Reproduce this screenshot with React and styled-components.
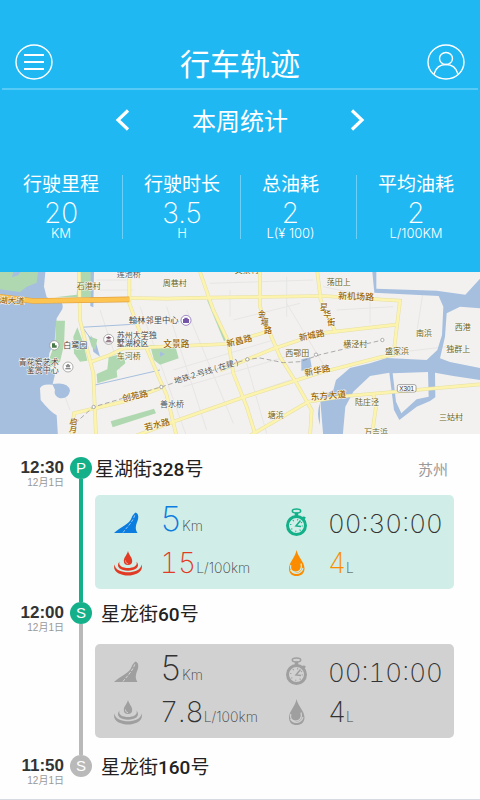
import React from 'react';
import styled, { createGlobalStyle } from 'styled-components';

const colors = {
  sky: '#1fb8f3',
  green: '#14b08a',
  grey: '#b9b9b9',
  mint: '#d0eee7',
  silver: '#d1d1d1',
  text: '#333333',
  muted: '#999999',
};

const GlobalStyle = createGlobalStyle`
  * {
    box-sizing: border-box;
  }

  body {
    margin: 0;
    background: #fefefe;
    color: ${colors.text};
    font-family: 'Noto Sans CJK SC', sans-serif;
  }

  button {
    padding: 0;
    border: 0;
    background: none;
    color: inherit;
    cursor: pointer;
  }
`

const Header = styled.header`
  background-color: ${colors.sky};
  color: #fff;
  padding: 36px 2px 33px;
`

const TopBar = styled.div`
  display: flex;
  align-items: center;
  justify-content: space-between;
  height: 54px;
  padding: 0 13px;
  border-bottom: 2px solid rgba(255, 255, 255, 0.25);
`

const Title = styled.h1`
  margin: 0;
  font-size: 30px;
  line-height: 40px;
  font-weight: 400;
`

const IconButton = styled.button`
  display: flex;
`

const PeriodBar = styled.nav`
  display: flex;
  align-items: center;
  justify-content: center;
  gap: 62px;
  height: 60px;
`

const Period = styled.h2`
  margin: 0;
  font-size: 24px;
  line-height: 32px;
  font-weight: 400;
`

const Stats = styled.div`
  display: grid;
  grid-template-columns: 120fr 118fr 116fr 122fr;
  margin-top: 25px;
`

const StatCell = styled.div`
  display: flex;
  padding-left: 21px;
  height: 64px;

  & + & {
    border-left: 1px solid rgba(255, 255, 255, 0.35);
  }
`

const Stat = styled.div`
  display: flex;
  flex-direction: column;
  align-items: center;
  margin-top: -6px;
  white-space: nowrap;
`

const StatLabel = styled.span`
  font-size: 19px;
  line-height: 28px;
`

const StatValue = styled.span`
  font-family: Inter, sans-serif;
  font-size: 28px;
  line-height: 32px;
  font-weight: 200;
`

const StatUnit = styled.span`
  font-family: Inter, 'Noto Sans CJK SC', sans-serif;
  font-size: 13px;
  line-height: 16px;
  margin-top: -4px;
  font-weight: 300;
`

const MapView = styled.svg`
  display: block;
  width: 100%;
  background-color: #f2f1ef;
  font-family: 'Noto Sans CJK SC', sans-serif;
  font-size: 24px;

  text {
    paint-order: stroke;
    stroke: #fbfaf5;
    stroke-width: 3px;
  }
`

const Timeline = styled.ol`
  list-style: none;
  margin: 0;
  padding: 23px 26px 13px 0;
  border-bottom: 1px solid #d5dbe0;
`

const Entry = styled.li`
  display: flex;
`

const When = styled.div`
  width: 64px;
  margin-right: 6px;
  padding-top: 1px;
  flex: none;
  text-align: right;
`

const Clock = styled.time`
  display: block;
  font-family: 'Liberation Sans', sans-serif;
  font-size: 17px;
  line-height: 20px;
  font-weight: 700;
`

const Day = styled.span`
  display: block;
  font-family: 'Liberation Sans', 'Noto Sans CJK SC', sans-serif;
  font-size: 10px;
  line-height: 10px;
  color: ${colors.muted};
`

const Rail = styled.div`
  display: flex;
  flex-direction: column;
  align-items: center;
  flex: none;
  width: 22px;
  margin-right: 3px;

  &::after {
    content: '';
    flex: 1;
    width: 4px;
    background-color: ${props => props.$line};
  }
`

const Dot = styled.span`
  width: 22px;
  height: 22px;
  border-radius: 50%;
  background-color: ${props => props.$color};
  color: #fff;
  font-family: 'Liberation Sans', sans-serif;
  font-size: 15px;
  line-height: 22px;
  text-align: center;
`

const Stop = styled.div`
  flex: 1;
  padding-bottom: ${props => props.$last ? 0 : props.$start ? 13 : 17}px;
`

const StopHead = styled.div`
  display: flex;
  align-items: center;
  justify-content: space-between;
  height: 22px;
  padding: 2px 6px 0 ${props => props.$start ? 0 : 6}px;
`

const Place = styled.h3`
  margin: 0;
  font-size: 19px;
  line-height: 22px;
  font-weight: 400;
  color: #222;
`

const HouseNumber = styled.span`
  font-family: Roboto, sans-serif;
  font-weight: 500;
`

const City = styled.span`
  font-size: 15px;
  line-height: 22px;
  color: ${colors.muted};
`

const Card = styled.div`
  display: grid;
  grid-template-columns: 1fr 1fr;
  margin-top: ${props => props.$active ? 16 : 20}px;
  padding: 5px 5px 5px 18px;
  border-radius: 5px;
  background-color: ${props => props.$active ? colors.mint : colors.silver};
`

const Metric = styled.div`
  display: flex;
  align-items: center;
  gap: 17px;
  height: 42px;
  color: ${props => props.$color};
`

const Reading = styled.div`
  padding-top: 3px;
  color: ${props => props.$color};
  font-family: Inter, sans-serif;
  font-size: 34px;
  line-height: 42px;
  font-weight: 200;
  white-space: nowrap;
`

const Figure = styled.span`
  font-size: ${props => props.$size}px;
  font-variant-numeric: tabular-nums;
`

const Unit = styled.span`
  font-size: 14px;
  color: #444;
`

const MenuIcon = () => (
  <svg width="38" height="38" viewBox="0 0 38 38" fill="none" stroke="currentColor">
    <ellipse cx="19" cy="19" rx="18" ry="17" strokeWidth="1.4" />
    <path d="M9 12h20M9 19h20M9 26h20" strokeWidth="1.8" />
  </svg>
)

const UserIcon = () => (
  <svg width="38" height="38" viewBox="0 0 38 38" fill="none" stroke="currentColor" strokeWidth="1.4">
    <ellipse cx="19" cy="19" rx="18" ry="17" />
    <ellipse cx="19" cy="15.500" rx="6.500" ry="6" />
    <path d="M7 31C9 24 14 21.500 19 21.500S29 24 31 31" />
  </svg>
)

const Chevron = ({ flip }) => (
  <svg width="15" height="22" viewBox="0 0 15 22" fill="none" stroke="currentColor" strokeWidth="3.200">
    <path d={flip ? 'M2 1.500L12 11L2 20.500' : 'M13 1.500L3 11L13 20.500'} />
  </svg>
)

const RoadIcon = () => (
  <svg width="30" height="28" viewBox="0 0 30 28">
    <path d="M1 26C7 20 17 17 18.500 11C19.500 8 21 7 22.500 5.500C25.500 6.500 26 10 24.500 14C22.500 19 22 22 24.500 26Z" fill="currentColor" />
    <path d="M10 25.500C14 20 20 15 22 7.500" fill="none" stroke="#fff" strokeOpacity="0.7" strokeWidth="0.8" strokeDasharray="3 1.500" />
  </svg>
)

const RippleIcon = () => (
  <svg width="30" height="28" viewBox="0 0 30 28" fill="currentColor">
    <path d="M15 2C16 6 19.200 8.500 19.200 12A4.200 4 0 0 1 10.800 12C10.800 8.500 14 6 15 2Z" />
    <path d="M6.500 12.500C2 18 8 21.800 15 21.800S28 18 23.500 12.500C25 17 20 19 15 19S5 17 6.500 12.500Z" />
    <path d="M1.500 15.500C-1 23 8 26.500 15 26.500S31 23 28.500 15.500C28 21 21 23.300 15 23.300S2 21 1.500 15.500Z" />
    <path d="M12.500 11.500C12.500 13.500 13.500 14.500 15 14.700" fill="none" stroke="#fff" strokeOpacity="0.7" strokeWidth="0.7" />
  </svg>
)

const StopwatchIcon = () => (
  <svg width="30" height="30" viewBox="0 -1 30 30" fill="none" stroke="currentColor">
    <circle cx="15.500" cy="18.500" r="9" strokeWidth="3" />
    <ellipse cx="15.500" cy="4" rx="4.200" ry="2" strokeWidth="1.500" />
    <path d="M15.500 5.500V9" strokeWidth="3.500" />
    <path d="M21.500 10L24 11.500M22.500 12.500L24 10" strokeWidth="2" />
    <path d="M19.500 13.500L15 19L20 19.500" strokeWidth="1.500" />
    <circle cx="15.500" cy="18.500" r="5.800" strokeWidth="1.300" strokeDasharray="1 3.555" />
  </svg>
)

const DropIcon = ({ cut }) => (
  <svg width="30" height="30" viewBox="0 0 30 30">
    <path d="M15.500 2C17 9 23.500 14 23.500 20.500C23.500 25.500 20 28 15.500 28S8 25.500 8 20.500C8 14 14.500 9 15.500 2Z" fill="currentColor" />
    <path
      d="M9.800 17C8.500 22 11.500 24 14.500 24C18.500 24 21.500 21 20 15.500M9.500 22C12 26.500 20 27 22 20"
      fill="none"
      stroke={cut}
      strokeWidth="1.200"
    />
  </svg>
)

const town = '#6b6220';
const road = '#9b6600';

// [text, x, y, fill, size, rotation]
const labels = [
  ['莲池桥', 350, 21, '#555'],
  ['石港村', 230, 58, town],
  ['翰林邻里中心', 386, 160, '#444', 25],
  ['苏州大学独', 350, 204, '#444', 24],
  ['墅湖校区', 350, 228, '#444'],
  ['白鹭园', 190, 233, '#444'],
  ['车河桥', 350, 268, town],
  ['青花瓷艺术', 56, 285, '#444'],
  ['鉴赏中心', 80, 309, '#444'],
  ['湖大道', -2, 99, road, 25, 3],
  ['创苑路', 369, 395, road, 26, -12],
  ['若水路', 436, 482, road, 26, -14],
  ['启', 208, 461, road, 24, 10],
  ['月', 206, 485, road, 24, 10],
  ['周巷村', 488, 48, town],
  ['文景路', 490, 230, road, 26],
  ['新昌路', 682, 231, road, 26, -14],
  ['金', 774, 140, road],
  ['堰', 782, 165, road],
  ['路', 792, 190, road],
  ['新城路', 899, 213, road, 26, -12],
  ['西鄂田', 856, 259, town],
  ['地铁 2 号线 ( 在建 )', 525, 342, '#555', 24, -17],
  ['善水桥', 480, 411, '#555'],
  ['新华路', 916, 319, road, 26, -12],
  ['塘浜', 803, 445, town],
  ['荡田上', 980, 46, town],
  ['新机场路', 1014, 87, road, 27, 2],
  ['星', 960, 119, road],
  ['华', 970, 142, road],
  ['街', 982, 166, road],
  ['横泾村', 1030, 231, town],
  ['南浜', 1248, 198, town],
  ['西港', 1364, 181, town],
  ['独群上', 1339, 245, town],
  ['盛家浜', 1155, 252, town],
  ['东方大道', 932, 391, road, 27, -5],
  ['陆庄泾', 1065, 406, town],
  ['三姑村', 1317, 450, town],
  ['万吉浜', 1092, 496, town],
  ['文景村', 704, 10, town],
];

const roads = [
  'M388 6V100L410 160L440 235L480 330L500 375L530 500',
  'M237 6L240 150L262 240L280 310L288 500',
  'M388 84L500 86L630 83L970 78L1200 92L1182 240',
  'M600 6L640 120L685 215L700 310L740 410L768 500',
  'M780 6L780 110L810 190L840 260L890 340L935 420L930 500',
  'M952 6L962 90L1008 190',
  'M440 232L680 222L800 185',
  'M272 276L330 255L370 235L440 232',
  'M215 500L222 430L370 395L480 355M220 430L400 388',
  'M400 500L520 455L730 382L960 308L1140 262L1200 250',
  'M660 302L820 236L960 190L1190 164',
  'M745 500L925 395L1040 378L1440 343',
  'M1120 372L1128 410L1115 500',
];

const CityMap = () => (
  <MapView viewBox="0 6 1440 486" role="img" aria-label="行车轨迹">
    <g fill="none" stroke="#e7e6e4" strokeWidth="3">
      <path d="M300 120L360 300M420 110L560 500M500 110L620 480M560 120L700 460M860 100L980 300M700 150L900 100M520 300L820 210M550 350L860 260M580 430L870 330M800 490L740 280M180 340L210 420M290 30H380M300 60H400M630 40L940 30M690 60V140M860 20V140M1010 80L1110 70V160" />
      <path d="M1170 250L1340 230M1010 120L1180 110M970 50L1110 80M1270 60L1250 190" />
    </g>

    <g fill="#a6bfdf">
      <path d="M0 6H136L132 50L140 82L185 98Q192 110 184 122L170 145L164 212L148 250L144 290L166 310L158 342Q205 335 210 362Q205 388 178 384Q160 376 165 360L158 344Q125 340 120 355L122 390Q150 425 170 436L174 500H0Z" />
      <path d="M270 6H282L280 112L271 108Z" />
      <path d="M272 195L290 225L300 260L280 245Z" />
      <path d="M1117 6H1129V56L1310 62L1396 74L1440 26V115L1380 110L1340 130L1335 200L1320 265L1350 276L1440 294V330L1360 318L1305 308L1306 382L1290 393L1250 410L1198 450L1182 420L1168 308L1110 318L1060 365L1036 410L1028 500H970L960 382L1000 360L1008 330L1050 294L1110 280L1160 264L1280 270L1312 240L1326 195L1330 110L1316 78L1123 68Z" />
      <path d="M904 268L930 262L936 298L904 302Z" />
      <path d="M960 400Q948 430 960 465Z" />
    </g>
    <path fill="#f2f1ef" d="M1178 310L1284 306L1286 380L1250 388L1204 430L1188 395Z" />

    <g fill="#b0d8b0">
      <path d="M0 6H114L110 38L80 50L60 66L0 58Z" />
      <path d="M235 6H272V82L165 82L230 74Z" />
      <path d="M168 152H195L192 225L180 275L150 292L145 275L166 215Z" />
      <path d="M232 172L250 220L262 272L240 275L222 250L220 200Z" />
      <path d="M265 198L292 208L286 240L275 230Z" />
      <path d="M290 312L322 298L326 262L370 250L376 280L350 302L352 322L292 340Z" />
      <path d="M332 454L462 416L468 430L338 472Z" />
      <path d="M450 225H525L536 265L480 284L462 270Z" />
      <path d="M621 90L632 92L682 208L672 214Z" />
    </g>
    <path fill="#a6bfdf" d="M480 245L495 252L480 260ZM40 6H62L54 16L36 22Z" />
    <path fill="none" stroke="#a6bfdf" strokeWidth="3" d="M242 172L415 162M285 345L480 300M250 175L275 210" />

    <g fill="none" stroke="#e6dfa4" strokeWidth="11">
      {roads.map(d => <path key={d} d={d} />)}
    </g>
    <g fill="none" stroke="#fbf3ae" strokeWidth="8">
      {roads.map(d => <path key={d} d={d} />)}
    </g>
    <path d="M-2 80L100 93L388 88" fill="none" stroke="#e0a040" strokeWidth="17" />
    <path d="M-2 80L100 93L388 88" fill="none" stroke="#fdc550" strokeWidth="13" />

    <path
      d="M225 460L280 411L480 352L742 268L780 264L850 278L900 275L960 254L1148 210"
      fill="none"
      stroke="#888"
      strokeWidth="2"
      strokeDasharray="14 8"
    />
    <g fill="#fff" stroke="#888" strokeWidth="2">
      <circle cx="281" cy="411" r="5" />
      <circle cx="484" cy="351" r="5" />
      <circle cx="742" cy="268" r="5" />
      <circle cx="948" cy="254" r="5" />
      <circle cx="1147" cy="210" r="5" />
      <circle cx="163" cy="226" r="14" />
      <circle cx="326" cy="208" r="15" />
      <circle cx="204" cy="291" r="15" />
      <circle cx="558" cy="151" r="15" stroke="#7455a8" />
    </g>
    <path d="M156 220H165V226H170V233H156Z" fill="#477847" />
    <path d="M317 203L326 199L335 203L326 207ZM320 209H332V212H320ZM317 214H335V217H317Z" fill="#775566" />
    <path d="M196 287L204 282L212 287ZM198 289H210V292H198ZM196 295H212V298H196Z" fill="#666" />
    <path d="M549 147H567V159H549ZM553 147V143H563V147" fill="#7455a8" />

    {labels.map(([text, x, y, fill, size, rotation]) => (
      <text
        key={text + x}
        x={x}
        y={y}
        fill={fill}
        fontSize={size}
        fontWeight={fill === road ? 500 : 400}
        transform={rotation ? `rotate(${rotation} ${x} ${y})` : undefined}
      >
        {text}
      </text>
    ))}

    <rect x="1192" y="344" width="56" height="22" rx="5" fill="#fff" stroke="#777" strokeWidth="2" />
    <text x="1220" y="362" textAnchor="middle" fontSize="19" fontFamily="Liberation Sans" fill="#333">X301</text>
  </MapView>
)

const stats = [
  { label: '行驶里程', value: '20', unit: 'KM' },
  { label: '行驶时长', value: '3.5', unit: 'H' },
  { label: '总油耗', value: '2', unit: 'L(¥ 100)' },
  { label: '平均油耗', value: '2', unit: 'L/100KM' },
];

const stops = [
  {
    time: '12:30', mark: 'P', street: '星湖街', number: 328, city: '苏州', start: true,
    dot: colors.green, line: colors.green,
    trip: { active: true, distance: '5', rate: '15', duration: '00:30:00', fuel: '4' },
  },
  {
    time: '12:00', mark: 'S', street: '星龙街', number: 60,
    dot: colors.green, line: colors.grey,
    trip: { distance: '5', rate: '7.8', duration: '00:10:00', fuel: '4' },
  },
  { time: '11:50', mark: 'S', street: '星龙街', number: 160, dot: colors.grey, line: 'transparent' },
];

const Trip = ({ active, distance, rate, duration, fuel }) => {
  const tone = color => (active ? color : '#9f9f9f');
  const ink = color => (active ? color : colors.text);

  return (
    <Card $active={active}>
      <Metric $color={tone('#0b7de0')}>
        <RoadIcon />
        <Reading $color={ink('#0b7de0')}><Figure $size={34}>{distance}</Figure><Unit>Km</Unit></Reading>
      </Metric>
      <Metric $color={tone(colors.green)}>
        <StopwatchIcon />
        <Reading $color={colors.text}><Figure $size={26}>{duration}</Figure></Reading>
      </Metric>
      <Metric $color={tone('#e23b25')}>
        <RippleIcon />
        <Reading $color={ink('#e23b25')}><Figure $size={28}>{rate}</Figure><Unit>L/100km</Unit></Reading>
      </Metric>
      <Metric $color={tone('#fb8c00')}>
        <DropIcon cut={active ? colors.mint : colors.silver} />
        <Reading $color={ink('#fb8c00')}><Figure $size={28}>{fuel}</Figure><Unit>L</Unit></Reading>
      </Metric>
    </Card>
  )
}

const App = () => (
  <>
    <GlobalStyle />
    <Header>
      <TopBar>
        <IconButton aria-label="菜单"><MenuIcon /></IconButton>
        <Title>行车轨迹</Title>
        <IconButton aria-label="用户"><UserIcon /></IconButton>
      </TopBar>
      <PeriodBar>
        <IconButton aria-label="上一周"><Chevron /></IconButton>
        <Period>本周统计</Period>
        <IconButton aria-label="下一周"><Chevron flip /></IconButton>
      </PeriodBar>
      <Stats>
        {stats.map(({ label, value, unit }) => (
          <StatCell key={label}>
            <Stat>
              <StatLabel>{label}</StatLabel>
              <StatValue>{value}</StatValue>
              <StatUnit>{unit}</StatUnit>
            </Stat>
          </StatCell>
        ))}
      </Stats>
    </Header>
    <CityMap />
    <Timeline>
      {stops.map(({ time, mark, street, number, city, start, dot, line, trip }) => (
        <Entry key={time}>
          <When>
            <Clock>{time}</Clock>
            <Day>12月1日</Day>
          </When>
          <Rail $line={line}>
            <Dot $color={dot}>{mark}</Dot>
          </Rail>
          <Stop $start={start} $last={!trip}>
            <StopHead $start={start}>
              <Place>{street}<HouseNumber>{number}</HouseNumber>号</Place>
              {city && <City>{city}</City>}
            </StopHead>
            {trip && <Trip {...trip} />}
          </Stop>
        </Entry>
      ))}
    </Timeline>
  </>
)

export default App
